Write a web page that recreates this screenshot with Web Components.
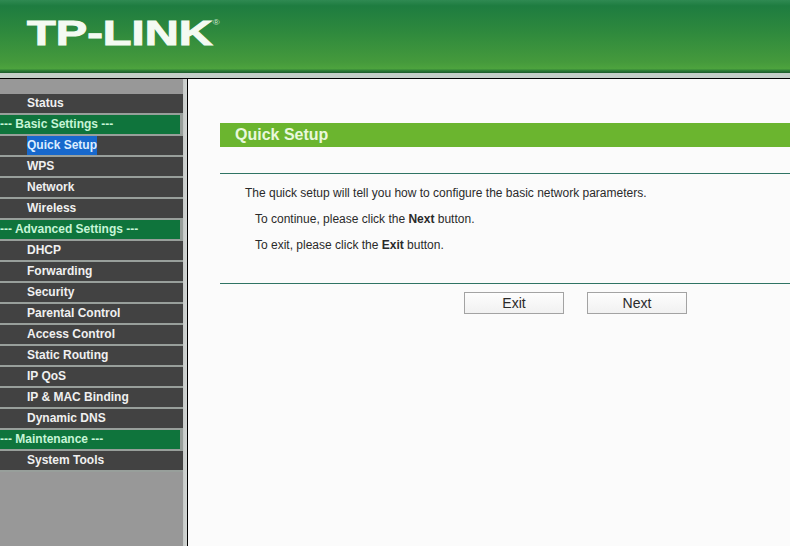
<!DOCTYPE html>
<html>
<head>
<meta charset="utf-8">
<title>TP-LINK</title>
<style>
  html, body { margin: 0; height: 100%; overflow: hidden; }
  body { font-family: "Liberation Sans", Arial, sans-serif; background: #fbfbfb; }
  #page { display: flex; flex-direction: column; height: 546px; }
  #main { display: flex; flex: 1; min-height: 0; }
</style>
</head>
<body>
<div id="page">
  <tp-header></tp-header>
  <div id="main">
    <tp-sidebar>
      <tp-item>Status</tp-item>
      <tp-item heading>--- Basic Settings ---</tp-item>
      <tp-item active>Quick Setup</tp-item>
      <tp-item>WPS</tp-item>
      <tp-item>Network</tp-item>
      <tp-item>Wireless</tp-item>
      <tp-item heading>--- Advanced Settings ---</tp-item>
      <tp-item>DHCP</tp-item>
      <tp-item>Forwarding</tp-item>
      <tp-item>Security</tp-item>
      <tp-item>Parental Control</tp-item>
      <tp-item>Access Control</tp-item>
      <tp-item>Static Routing</tp-item>
      <tp-item>IP QoS</tp-item>
      <tp-item>IP &amp; MAC Binding</tp-item>
      <tp-item>Dynamic DNS</tp-item>
      <tp-item heading>--- Maintenance ---</tp-item>
      <tp-item>System Tools</tp-item>
    </tp-sidebar>
    <tp-panel title="Quick Setup">
      <p class="first">The quick setup will tell you how to configure the basic network parameters.</p>
      <p>To continue, please click the <b>Next</b> button.</p>
      <p>To exit, please click the <b>Exit</b> button.</p>
      <tp-button slot="actions">Exit</tp-button>
      <tp-button slot="actions">Next</tp-button>
    </tp-panel>
  </div>
</div>

<script>
const define = (tag, cls) => {
  if (window.customElements.get(tag) === undefined) window.customElements.define(tag, cls);
};

class Base extends HTMLElement {
  constructor(markup) {
    super();
    const template = document.createElement("template");
    template.innerHTML = markup;
    this.attachShadow({ mode: "open" }).appendChild(template.content.cloneNode(true));
  }
}

class TpHeader extends Base {
  constructor() {
    super(`
      <style>
        :host {
          display: block;
          height: 79px;
          box-sizing: border-box;
          background: #c4cfc9;
          border-bottom: 1px solid #000;
        }
        .bar {
          height: 73px;
          box-sizing: border-box;
          padding: 15px 0 0 27px;
          background: linear-gradient(#2f8a52 0%, #1e7c40 8%, #2f8a3d 45%, #459a3c 85%, #4da33e 94%, #2a7a35 97%, #1c5a2c 100%);
        }
        .logo {
          display: inline-block;
          position: relative;
          font: bold 35px/35px "Liberation Sans", Arial, sans-serif;
          color: #f4faf2;
          transform: scaleX(1.345);
          transform-origin: left top;
          -webkit-text-stroke: 1px #f4faf2;
        }
        sup {
          position: absolute;
          left: 100%;
          top: 4px;
          font: 7px/7px "Liberation Sans", Arial, sans-serif;
          color: #cfe6d2;
          -webkit-text-stroke: 0;
        }
      </style>
      <div class="bar"><span class="logo">TP-LINK<sup>®</sup></span></div>
    `);
  }
}

class TpSidebar extends Base {
  constructor() {
    super(`
      <style>
        :host {
          display: block;
          width: 188px;
          flex: none;
          box-sizing: border-box;
          padding-top: 15px;
          background: linear-gradient(90deg, #989898 183px, #c5c9c7 183px, #d3d6d4 187px, #000 187px);
        }
        .list { display: flex; flex-direction: column; width: 183px; }
      </style>
      <div class="list"><slot></slot></div>
    `);
  }
}

class TpItem extends Base {
  constructor() {
    super(`
      <style>
        :host {
          display: block;
          height: 21px;
          box-sizing: border-box;
          padding-left: 27px;
          background: #424242;
          border-bottom: 2px solid #989f9b;
          font: bold 12px/18px "Liberation Sans", Arial, sans-serif;
          color: #f0f0f0;
          white-space: nowrap;
        }
        :host([heading]) {
          padding-left: 0;
          background: #0f743c;
          border-right: 3px solid #989f9b;
          color: #c6f5d6;
        }
        :host([active]) span {
          display: inline-block;
          height: 19px;
          background: #1768cc;
          color: #dcedff;
        }
      </style>
      <span><slot></slot></span>
    `);
  }
}

class TpPanel extends Base {
  constructor() {
    super(`
      <style>
        :host {
          display: block;
          flex: 1;
          min-width: 0;
          box-sizing: border-box;
          padding: 44px 0 0 32px;
          background: #fbfbfb;
          font: 12px/15px "Liberation Sans", Arial, sans-serif;
          color: #2a2a2a;
        }
        h1 {
          margin: 0;
          height: 24px;
          box-sizing: border-box;
          padding-left: 15px;
          background: #6bb52f;
          font: bold 16px/23px "Liberation Sans", Arial, sans-serif;
          color: #e9f8dc;
        }
        .body {
          margin-top: 26px;
          height: 111px;
          box-sizing: border-box;
          padding: 12px 0 0 25px;
          border-top: 1px solid #2f7464;
          border-bottom: 1px solid #2f7464;
        }
        ::slotted(p) { margin: 0 0 11px 10px; }
        ::slotted(p.first) { margin-left: 0; margin-bottom: 11px; }
        .actions {
          display: flex;
          gap: 23px;
          padding: 8px 0 0 244px;
        }
      </style>
      <h1></h1>
      <div class="body"><slot></slot></div>
      <div class="actions"><slot name="actions"></slot></div>
    `);
  }

  connectedCallback() {
    this.shadowRoot.querySelector("h1").textContent = this.getAttribute("title");
  }
}

class TpButton extends Base {
  constructor() {
    super(`
      <style>
        :host {
          display: block;
          width: 100px;
          height: 22px;
          box-sizing: border-box;
          border: 1px solid #a3a3a3;
          background: linear-gradient(#fdfdfd, #f1f1f1);
          font: 14px/20px "Liberation Sans", Arial, sans-serif;
          color: #2a2a2a;
          text-align: center;
        }
      </style>
      <slot></slot>
    `);
  }
}

define("tp-header", TpHeader);
define("tp-sidebar", TpSidebar);
define("tp-item", TpItem);
define("tp-panel", TpPanel);
define("tp-button", TpButton);
</script>
</body>
</html>
